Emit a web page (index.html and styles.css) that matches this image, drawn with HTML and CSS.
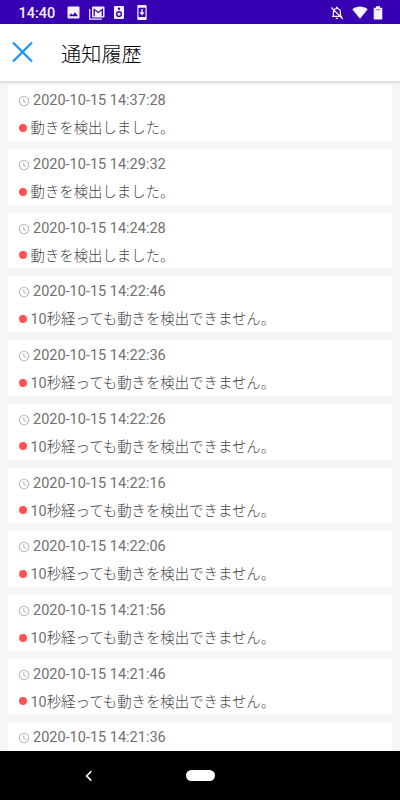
FILE: index.html
```
<!DOCTYPE html>
<html lang="ja">
<head>
<meta charset="utf-8">
<title>通知履歴</title>
<link rel="stylesheet" href="styles.css">
</head>
<body>
<svg class="defs" width="0" height="0">
  <symbol id="clock" viewBox="0 0 12 12"><circle cx="6" cy="6" r="4.7"/><path d="M5.8 3v3.2l2.3 1.4"/></symbol>
</svg>
<div class="screen">
  <div class="status">
    <span class="time">14:40</span>
    <svg class="photo" width="13" height="13" viewBox="0 0 13 13"><path fill-rule="evenodd" d="M1.500.5h10a1 1 0 0 1 1 1v10a1 1 0 0 1-1 1h-10a1 1 0 0 1-1-1v-10a1 1 0 0 1 1-1zM2 10.300h9L8 6.200 5.800 9 4.200 7.200z"/></svg>
    <svg class="mail" width="16" height="14" viewBox="0 0 16 14"><path d="M.7 3v10.200h12.200" fill="none" stroke="currentColor" stroke-width="1.200"/><path fill-rule="evenodd" d="M4 .5h10.500a1 1 0 0 1 1 1v9a1 1 0 0 1-1 1H4a1 1 0 0 1-1-1v-9a1 1 0 0 1 1-1zM4.500 2.300v7.900h1.300V4.600L9.250 7.300l3.450-2.700v5.600H14V2.300L9.250 5.800z"/></svg>
    <svg class="speaker" width="10" height="13" viewBox="0 0 10 13"><path fill-rule="evenodd" d="M1 0h8a1 1 0 0 1 1 1v11a1 1 0 0 1-1 1H1a1 1 0 0 1-1-1V1a1 1 0 0 1 1-1zM5 1.500a1.200 1.200 0 1 0 0 2.400 1.200 1.200 0 0 0 0-2.400zM5 5a3.100 3.100 0 1 0 0 6.200A3.100 3.100 0 0 0 5 5z"/><circle cx="5" cy="8.100" r="1.700"/></svg>
    <svg class="phone" width="10" height="15" viewBox="0 0 10 15"><path fill-rule="evenodd" d="M1.300 0h7.400a1 1 0 0 1 1 1v13a1 1 0 0 1-1 1H1.300a1 1 0 0 1-1-1V1a1 1 0 0 1 1-1zM1.500 2.800v9.200h7V2.800z"/><path d="M4.300 4h1.400v3.300h2L5 10.500 2.300 7.300h2z"/></svg>
    <svg class="bell" width="14" height="14" viewBox="0 0 14 14"><path d="M3.400 10V6a3.500 3.500 0 0 1 7 0v4M2 10.400h10M1.300 1.500l11.500 11.500" fill="none" stroke="currentColor" stroke-width="1.200"/><path d="M6 .8h1.800v2H6zM5.500 11.700h2.800a1.400 1.400 0 0 1-2.800 0z"/></svg>
    <svg class="wifi" width="16" height="13" viewBox="0 0 16 13"><path d="M.3 3.300C4.800-.3 11.200-.3 15.700 3.300L8 12.700z"/></svg>
    <svg class="battery" width="10" height="14" viewBox="0 0 10 14"><path d="M3 .3h4v1.500h1.500q.8 0 .8.800v10.200q0 .8-.8.800h-7q-.8 0-.8-.8V2.600q0-.8.800-.8H3z"/><path d="M2.500 3.700h5" stroke="#9d82dc" stroke-width="1.200"/></svg>
  </div>
  <header class="header">
    <svg width="22" height="22" viewBox="0 0 22 22"><path d="M1 1.500l19 19M20 1.500l-19 19"/></svg>
    <h1>通知履歴</h1>
  </header>
  <main class="list">
    <article class="card"><div class="date"><svg><use href="#clock"/></svg><time>2020-10-15 14:37:28</time></div><p>動きを検出しました。</p></article>
    <article class="card"><div class="date"><svg><use href="#clock"/></svg><time>2020-10-15 14:29:32</time></div><p>動きを検出しました。</p></article>
    <article class="card"><div class="date"><svg><use href="#clock"/></svg><time>2020-10-15 14:24:28</time></div><p>動きを検出しました。</p></article>
    <article class="card"><div class="date"><svg><use href="#clock"/></svg><time>2020-10-15 14:22:46</time></div><p><span>10</span>秒経っても動きを検出できません。</p></article>
    <article class="card"><div class="date"><svg><use href="#clock"/></svg><time>2020-10-15 14:22:36</time></div><p><span>10</span>秒経っても動きを検出できません。</p></article>
    <article class="card"><div class="date"><svg><use href="#clock"/></svg><time>2020-10-15 14:22:26</time></div><p><span>10</span>秒経っても動きを検出できません。</p></article>
    <article class="card"><div class="date"><svg><use href="#clock"/></svg><time>2020-10-15 14:22:16</time></div><p><span>10</span>秒経っても動きを検出できません。</p></article>
    <article class="card"><div class="date"><svg><use href="#clock"/></svg><time>2020-10-15 14:22:06</time></div><p><span>10</span>秒経っても動きを検出できません。</p></article>
    <article class="card"><div class="date"><svg><use href="#clock"/></svg><time>2020-10-15 14:21:56</time></div><p><span>10</span>秒経っても動きを検出できません。</p></article>
    <article class="card"><div class="date"><svg><use href="#clock"/></svg><time>2020-10-15 14:21:46</time></div><p><span>10</span>秒経っても動きを検出できません。</p></article>
    <article class="card"><div class="date"><svg><use href="#clock"/></svg><time>2020-10-15 14:21:36</time></div></article>
  </main>
  <nav class="nav">
    <svg width="8" height="12" viewBox="0 0 8 12"><path d="M6.300 1.200L1.600 5.900l4.700 4.700"/></svg>
    <span class="home"></span>
  </nav>
</div>
</body>
</html>
```

FILE: styles.css
```
* { box-sizing: border-box; }
body { margin: 0; font-family: Roboto, "Noto Sans CJK JP", sans-serif; }
.defs { display: block; }
.screen { width: 400px; height: 800px; display: flex; flex-direction: column; overflow: hidden; background: #f6f6f6; }
.status { height: 24px; flex: none; display: flex; align-items: center; background: #3700b3; color: #f4f0ff; padding: 1px 17px 0 18px; }
.status svg { fill: currentColor; flex: none; }
.time { width: 49px; font: 500 14.500px/20px Roboto, sans-serif; padding: 2px 0 0 .5px; }
.mail { margin-left: 9px; }
.speaker { margin-left: 9px; }
.phone { margin-left: 13px; }
.bell { margin-left: auto; }
.wifi { margin-left: 8px; }
.battery { margin-left: 5px; }
.header { height: 57px; flex: none; display: flex; align-items: center; padding: 0 11px 1px 12px; background: #fff; box-shadow: 0 1px 3px rgba(0,0,0,.18); z-index: 1; }
.header svg { fill: none; stroke: #2196f3; stroke-width: 2.4; }
h1 { margin: 6px 0 0 27px; font-size: 20.200px; line-height: 28px; font-weight: 300; color: #000; }
.list { flex: 1; min-height: 0; overflow: hidden; padding: 4.300px 8px 0; display: flex; flex-direction: column; gap: 8px; }
.card { height: 55.730px; flex: none; padding: 5px 10px 0; background: #fff; }
.date { height: 20px; display: flex; align-items: center; color: #707070; }
.date svg { width: 12px; height: 12px; margin-right: 3px; margin-top: 2px; fill: none; stroke: #bbb; stroke-width: 1.1; }
time { font-size: 14.500px; line-height: 20px; padding-top: 2px; }
.card p { margin: 9px 0 0; height: 20px; display: flex; align-items: center; font-size: 14.400px; line-height: 20px; font-weight: 300; color: #444; white-space: nowrap; }
.card p span { font-weight: 400; color: #707070; }
.card p::before { content: ""; width: 8px; height: 8px; margin: 0 4px 3px .5px; border-radius: 50%; background: #ff5252; }
.nav { height: 49px; flex: none; display: flex; align-items: center; padding-left: 85px; background: #000; z-index: 1; }
.nav svg { fill: none; stroke: #fff; stroke-width: 1.600; }
.home { width: 29px; height: 11px; margin-left: 93px; border-radius: 6px; background: #fff; }
```
